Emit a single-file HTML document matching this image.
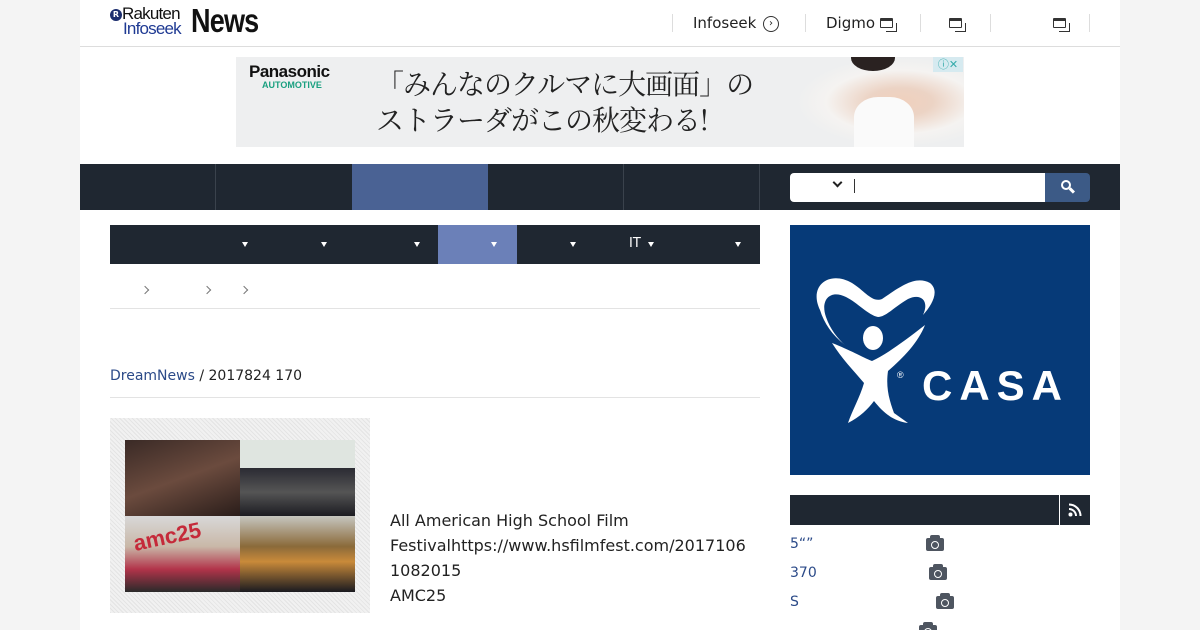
<!DOCTYPE html>
<html><head><meta charset="utf-8"><style>
*{margin:0;padding:0;box-sizing:border-box}
html,body{width:1200px;height:630px;overflow:hidden}
body{background:#f4f4f4;font-family:"DejaVu Sans","Liberation Sans","Noto Sans CJK JP",sans-serif;color:#222;position:relative}
.wrap{position:absolute;left:80px;top:0;width:1040px;height:630px;background:#fff;overflow:hidden}
.a{position:absolute}
.sep{position:absolute;top:14px;width:1px;height:18px;background:#ddd}
.win{position:absolute;width:13px;height:10px;border:1.5px solid #333;border-top-width:3px;border-radius:1px}
.win:after{content:"";position:absolute;right:-5px;bottom:-5px;width:10px;height:8px;border-right:1.5px solid #333;border-bottom:1.5px solid #333}
.tri{position:absolute;top:242px;width:0;height:0;border-left:3.5px solid transparent;border-right:3.5px solid transparent;border-top:5px solid #fff}
.chev{position:absolute;top:287px;width:6px;height:6px;border-right:1.2px solid #777;border-top:1.2px solid #777;transform:rotate(45deg)}
.cam{position:absolute;width:18px;height:13px;background:#4e5560;border-radius:2px}
.cam:before{content:"";position:absolute;left:4px;top:-3px;width:10px;height:4px;background:#4e5560;border-radius:2px 2px 0 0}
.cam:after{content:"";position:absolute;left:5px;top:3px;width:6px;height:6px;border:1.5px solid #fff;border-radius:50%}
</style></head><body>
<div class="wrap">
 <div class="a" style="left:30px;top:9px;width:12px;height:12px;border-radius:50%;background:#1c2e6e;color:#fff;font-size:8px;font-weight:bold;text-align:center;line-height:12px">R</div>
 <div class="a" style="left:42px;top:4px;font-size:17px;font-family:'Liberation Sans',sans-serif;color:#111;letter-spacing:-0.8px">Rakuten</div>
 <div class="a" style="left:43px;top:19px;font-size:17px;font-family:'Liberation Sans',sans-serif;color:#1f3a93;letter-spacing:-0.8px">Infoseek</div>
 <div class="a" style="left:111px;top:2px;font-size:33px;font-weight:bold;font-family:'Liberation Sans',sans-serif;color:#111;transform:scaleX(0.82);transform-origin:left;letter-spacing:-1px">News</div>
 <div class="sep" style="left:592px"></div>
 <div class="a" style="left:613px;top:14px;font-size:15px">Infoseek</div>
 <div class="a" style="left:683px;top:16px;width:16px;height:16px;border:1.5px solid #333;border-radius:50%;font-size:10px;text-align:center;line-height:13px">›</div>
 <div class="sep" style="left:725px"></div>
 <div class="a" style="left:746px;top:14px;font-size:15px">Digmo</div>
 <div class="win" style="left:800px;top:18px"></div>
 <div class="sep" style="left:840px"></div>
 <div class="win" style="left:869px;top:18px"></div>
 <div class="sep" style="left:910px"></div>
 <div class="win" style="left:973px;top:18px"></div>
 <div class="sep" style="left:1009px"></div>
 <div class="a" style="left:0;top:46px;width:1040px;height:1px;background:#ddd"></div>
 <div class="a" style="left:156px;top:57px;width:728px;height:90px;background:#eeeff0;overflow:hidden">
  <div class="a" style="left:13px;top:5px;font-family:'Liberation Sans',sans-serif;font-weight:bold;font-size:17px;color:#111;letter-spacing:-0.5px">Panasonic</div>
  <div class="a" style="left:26px;top:23px;font-family:'Liberation Sans',sans-serif;font-weight:bold;font-size:9px;color:#1aa080">AUTOMOTIVE</div>
  <div class="a" style="left:140px;top:8px;font-family:'Noto Serif CJK SC','Noto Sans CJK JP',serif;font-size:28px;line-height:36px;color:#222;letter-spacing:-1px">「みんなのクルマに大画面」の<br>ストラーダがこの秋変わる!</div>
  <div class="a" style="left:560px;top:0;width:168px;height:90px;background:radial-gradient(ellipse at 62% 50%,#f0d0bd 0,#ecd3c4 22%,#f5f3f1 50%,#eeeff0 70%)"></div>
  <div class="a" style="left:615px;top:-12px;width:44px;height:26px;border-radius:50%;background:#2a2221"></div>
  <div class="a" style="left:618px;top:40px;width:60px;height:50px;border-radius:40% 40% 0 0;background:#fafafa"></div>
  <div class="a" style="left:697px;top:0;width:30px;height:15px;background:#d6eaf0;color:#3aa;font-size:11px;text-align:center;line-height:15px">ⓘ✕</div>
 </div>
 <div class="a" style="left:0;top:164px;width:1040px;height:46px;background:#1f2731"></div>
 <div class="a" style="left:135px;top:164px;width:1px;height:46px;background:#3a424c"></div>
 <div class="a" style="left:272px;top:164px;width:136px;height:46px;background:#4a6294"></div>
 <div class="a" style="left:543px;top:164px;width:1px;height:46px;background:#3a424c"></div>
 <div class="a" style="left:679px;top:164px;width:1px;height:46px;background:#3a424c"></div>
 <div class="a" style="left:710px;top:173px;width:255px;height:29px;background:#fff;border-radius:4px 0 0 4px"></div>
 <div class="a" style="left:754px;top:179px;width:7px;height:7px;border-right:2px solid #222;border-bottom:2px solid #222;transform:rotate(45deg)"></div>
 <div class="a" style="left:774px;top:179px;width:1px;height:14px;background:#333"></div>
 <div class="a" style="left:965px;top:173px;width:45px;height:29px;background:#3c5a86;border-radius:0 4px 4px 0"></div>
 <div class="a" style="left:981px;top:180px;width:10px;height:10px;border:2px solid #fff;border-radius:50%"></div>
 <div class="a" style="left:989px;top:189px;width:6px;height:2.5px;background:#fff;transform:rotate(45deg)"></div>
 <div class="a" style="left:30px;top:225px;width:650px;height:39px;background:#1f2731"></div>
 <div class="a" style="left:358px;top:225px;width:79px;height:39px;background:#6b80b8"></div>
 <div class="tri" style="left:162px"></div><div class="tri" style="left:241px"></div><div class="tri" style="left:334px"></div><div class="tri" style="left:411px"></div><div class="tri" style="left:490px"></div><div class="tri" style="left:568px"></div><div class="tri" style="left:655px"></div>
 <div class="a" style="left:549px;top:236px;color:#fff;font-size:13px">IT</div>
 <div class="chev" style="left:62px"></div><div class="chev" style="left:124px"></div><div class="chev" style="left:161px"></div>
 <div class="a" style="left:30px;top:308px;width:650px;height:1px;background:#e3e3e3"></div>
 <div class="a" style="left:30px;top:368px;font-size:14px"><span style="color:#2b4a88">DreamNews</span> / 2017824 170</div>
 <div class="a" style="left:30px;top:397px;width:650px;height:1px;background:#e3e3e3"></div>
 <div class="a" style="left:30px;top:418px;width:260px;height:195px;background:repeating-linear-gradient(45deg,#e4e4e4 0 1px,#f1f1f1 1px 3px)"></div>
 <div class="a" style="left:45px;top:440px;width:230px;height:152px;background:#222;overflow:hidden">
  <div class="a" style="left:0;top:0;width:115px;height:76px;background:linear-gradient(160deg,#3a2a26,#6b4b3e 50%,#2a1d1a)"></div>
  <div class="a" style="left:115px;top:0;width:115px;height:28px;background:#dfe5e0"></div>
  <div class="a" style="left:115px;top:28px;width:115px;height:48px;background:linear-gradient(#2b2b33,#555 50%,#1c1c22)"></div>
  <div class="a" style="left:0;top:76px;width:115px;height:76px;background:linear-gradient(#d8d8d8,#c9b8a8 40%,#b2344a 70%,#2a2a2a)"></div>
  <div class="a" style="left:8px;top:84px;color:#c52a3a;font-weight:bold;font-size:22px;transform:rotate(-12deg);font-family:'Liberation Sans',sans-serif">amc25</div>
  <div class="a" style="left:115px;top:76px;width:115px;height:76px;background:linear-gradient(#c6c6c0,#8a6a3a 40%,#c98a3a 60%,#1a1a20)"></div>
 </div>
 <div class="a" style="left:310px;top:508px;font-size:16px;line-height:25px;color:#222">All American High School Film<br>Festivalhttps://www.hsfilmfest.com/2017106<br>1082015<br>AMC25</div>
 <div class="a" style="left:710px;top:225px;width:300px;height:250px;background:#063a78">
  <svg width="300" height="250" viewBox="0 0 300 250">
   <path d="M30 85 C18 60 40 45 62 58 C75 66 82 78 92 74 C110 62 125 50 140 58 C150 66 142 80 133 90 C140 75 130 68 118 74 C104 82 96 92 88 92 C78 90 68 78 56 72 C40 64 30 75 36 92 C40 104 48 114 55 120 C42 110 34 98 30 85Z" fill="#fff"/>
   <ellipse cx="83" cy="113" rx="10" ry="12" fill="#fff"/>
   <path d="M42 118 C60 125 72 132 82 136 C95 130 112 118 135 100 C128 118 112 134 98 146 C96 160 98 172 104 188 L118 198 C102 196 92 186 84 176 C78 184 70 192 58 198 C62 186 70 172 74 158 C64 146 52 134 42 118Z" fill="#fff"/>
   <text x="107" y="153" font-size="9" fill="#fff" font-family="Liberation Sans">®</text>
   <text x="132" y="175" font-size="42" font-weight="bold" fill="#fff" font-family="Liberation Sans,sans-serif" letter-spacing="7">CASA</text>
  </svg>
 </div>
 <div class="a" style="left:710px;top:495px;width:300px;height:30px;background:#1f2731"></div>
 <div class="a" style="left:979px;top:495px;width:1px;height:30px;background:#fff"></div>
 <svg class="a" style="left:988px;top:503px" width="14" height="14" viewBox="0 0 14 14"><circle cx="2.5" cy="11.5" r="2" fill="#fff"/><path d="M1 6 A7 7 0 0 1 8 13" stroke="#fff" stroke-width="2" fill="none"/><path d="M1 1.5 A11.5 11.5 0 0 1 12.5 13" stroke="#fff" stroke-width="2" fill="none"/></svg>
 <div class="a" style="left:710px;top:536px;font-size:14px;color:#2b4a88">5“”</div>
 <div class="cam" style="left:846px;top:538px"></div>
 <div class="a" style="left:710px;top:565px;font-size:14px;color:#2b4a88">370</div>
 <div class="cam" style="left:849px;top:567px"></div>
 <div class="a" style="left:710px;top:594px;font-size:14px;color:#2b4a88">S</div>
 <div class="cam" style="left:856px;top:596px"></div>
 <div class="cam" style="left:839px;top:625px"></div>
</div>
</body></html>
